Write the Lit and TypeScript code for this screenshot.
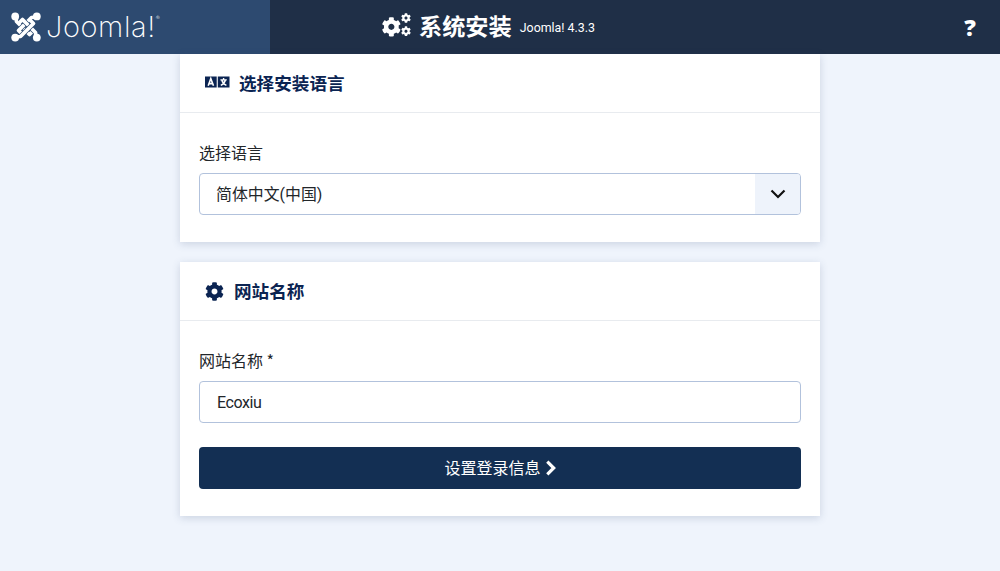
import { LitElement, html, css, svg } from "lit";
import { customElement } from "lit/decorators.js";

const GEAR = "M487.4 315.7l-42.6-24.6c4.3-23.2 4.3-47 0-70.2l42.6-24.6c4.9-2.8 7.1-8.6 5.5-14-11.1-35.6-30-67.8-54.7-94.6-3.8-4.1-10-5.1-14.8-2.3L380.8 110c-17.9-15.4-38.5-27.3-60.8-35.1V25.8c0-5.6-3.9-10.5-9.4-11.7-36.7-8.2-74.3-7.8-109.2 0-5.5 1.2-9.4 6.1-9.4 11.7V75c-22.2 7.9-42.8 19.8-60.8 35.1L88.7 85.5c-4.9-2.8-11-1.9-14.8 2.3-24.7 26.7-43.6 58.9-54.7 94.6-1.7 5.4.6 11.2 5.5 14L67.3 221c-4.3 23.2-4.3 47 0 70.2l-42.6 24.6c-4.9 2.8-7.1 8.6-5.5 14 11.1 35.6 30 67.8 54.7 94.6 3.8 4.1 10 5.1 14.8 2.3l42.6-24.6c17.9 15.4 38.5 27.3 60.8 35.1v49.2c0 5.6 3.9 10.5 9.4 11.7 36.7 8.2 74.3 7.8 109.2 0 5.5-1.2 9.4-6.1 9.4-11.7v-49.2c22.2-7.9 42.8-19.8 60.8-35.1l42.6 24.6c4.9 2.8 11 1.9 14.8-2.3 24.7-26.7 43.6-58.9 54.7-94.6 1.5-5.5-.7-11.3-5.6-14.1zM256 336c-44.1 0-80-35.9-80-80s35.9-80 80-80 80 35.9 80 80-35.9 80-80 80z";

const gearIcon = (cls: string) => html`<svg class=${cls} viewBox="0 0 512 512" fill="currentColor"><path d=${GEAR}></path></svg>`;

const cogsIcon = html`<svg class="cogs" viewBox="0 0 30 24" fill="currentColor">
  ${svg`<g transform="translate(0.5 4) scale(0.0385)"><path d=${GEAR}></path></g>
  <g transform="translate(20 0) scale(0.0195)"><path d=${GEAR}></path></g>
  <g transform="translate(20 13.2) scale(0.0195)"><path d=${GEAR}></path></g>`}
</svg>`;

const langIcon = html`<svg class="lang" viewBox="0 0 25 12">
  <rect x="0" y="0.5" width="11.7" height="11" fill="#0b2452"></rect>
  <rect x="12.8" y="0.5" width="11.7" height="11" fill="#0b2452"></rect>
  <path d="M3.2 9.8 5.8 2.6 8.5 9.8M4.1 7.6H7.6" fill="none" stroke="#fff" stroke-width="1.6"></path>
  <path d="M18.6 2v1.4M15.4 3.9h6.4M16.8 4c.5 2.4 2.2 4.2 4.6 5.4M20.4 4c-.5 2.4-2.2 4.2-4.6 5.4" fill="none" stroke="#fff" stroke-width="1.4"></path>
</svg>`;

const HOOKS = [
  "M5 5 L5.5 9.5 L18.5 22.5 L21 20",
  "M25 5 L20.5 5.5 L7.5 18.5 L10 21",
  "M25 25 L24.5 20.5 L11.5 7.5 L9 10",
  "M5 25 L9.5 24.5 L22.5 11.5 L20 9",
];

const joomlaMark = html`<svg class="mark" viewBox="0 0 30 30" fill="none" stroke-linejoin="round" stroke-linecap="round">
  ${HOOKS.map((d) => svg`
    <path d=${d} stroke="#2d4a70" stroke-width="5" stroke-linecap="butt"></path>
    <path d=${d} stroke="#fff" stroke-width="3.7"></path>`)}
  <g fill="#fff">
    <circle cx="4.2" cy="4.4" r="3.9"></circle>
    <circle cx="25.8" cy="4.4" r="3.9"></circle>
    <circle cx="4.2" cy="25.6" r="3.9"></circle>
    <circle cx="25.8" cy="25.6" r="3.9"></circle>
  </g>
</svg>`;

@customElement("app-root")
export class AppRoot extends LitElement {
  static styles = css`
    :host {
      display: block;
      min-height: 571px;
      background: #eff4fc;
      font-family: "Roboto", "Noto Sans CJK SC", sans-serif;
      color: #22262a;
      font-size: 16px;
    }
    * { box-sizing: border-box; }
    header {
      height: 54px;
      background: #1f2f47;
      display: flex;
      align-items: center;
      color: #fff;
    }
    .brand {
      width: 270px;
      height: 54px;
      background: #2d4a70;
      display: flex;
      align-items: center;
      padding-left: 11px;
      gap: 5px;
      flex: none;
    }
    .mark { width: 30px; height: 30px; flex: none; }
    .word {
      font-family: "Inter", sans-serif;
      font-weight: 200;
      font-size: 29px;
      line-height: 30px;
      letter-spacing: 0.6px;
      position: relative;
    }
    .word sup {
      font-size: 6px;
      position: absolute;
      top: 2px;
      left: 100%;
      line-height: 8px;
      letter-spacing: 0;
    }
    .title {
      display: flex;
      align-items: center;
      margin-left: 111px;
      padding-bottom: 5px;
      flex: 1;
    }
    .cogs { width: 30px; height: 24px; flex: none; margin-right: 8px; }
    .title h1 {
      margin: 0;
      font-size: 23.2px;
      font-weight: 700;
      line-height: 30px;
      font-family: "Noto Sans CJK SC", sans-serif;
    }
    .ver { font-size: 12.4px; margin-left: 8px; margin-top: 5px; }
    .help {
      font-family: "Noto Sans", sans-serif;
      font-weight: 900;
      font-size: 23px;
      line-height: 24px;
      width: 60px;
      text-align: center;
    }
    main {
      width: 640px;
      margin: 0 auto;
      display: flex;
      flex-direction: column;
      gap: 20px;
    }
    .card {
      background: #fff;
      box-shadow: 0 2px 8px rgba(60, 80, 120, 0.2);
    }
    .head {
      height: 59px;
      border-bottom: 1px solid #e8ebef;
      display: flex;
      align-items: center;
      padding: 0 0 2px 25px;
      color: #0b2452;
      font-size: 17.6px;
      font-weight: 700;
    }
    .head span { font-family: "Noto Sans CJK SC", sans-serif; }
    .lang { width: 25px; height: 12px; margin-right: 9px; flex: none; }
    .gear { width: 19px; height: 19px; margin: 2px 10px 0 0; flex: none; }
    .body { padding: 27px 19px 27px; }
    label {
      display: block;
      line-height: 24px;
      margin-bottom: 9px;
      font-size: 16px;
      font-family: "Noto Sans CJK SC", sans-serif;
    }
    .field {
      height: 42px;
      border: 1px solid #b2c2dc;
      border-radius: 4px;
      background: #fff;
      display: flex;
      align-items: center;
      padding-left: 17px;
      font-size: 16px;
      letter-spacing: -0.4px;
      overflow: hidden;
    }
    .grow { flex: 1; padding-bottom: 2px; margin-left: -1px; font-size: 15.9px; letter-spacing: 0; }
    .chev {
      width: 45px;
      align-self: stretch;
      background: #eef3fb;
      display: flex;
      align-items: center;
      justify-content: center;
    }
    .chev svg { width: 16px; height: 10px; }
    button {
      display: flex;
      align-items: center;
      justify-content: center;
      gap: 4px;
      width: 100%;
      height: 42px;
      margin-top: 24px;
      background: #132f53;
      color: #fff;
      border: 0;
      border-radius: 4px;
      font: inherit;
      font-size: 16px;
      font-family: "Noto Sans CJK SC", sans-serif;
      padding: 0 0 2px;
    }
    button svg { width: 11px; height: 16px; margin-top: 2px; }
  `;

  render() {
    return html`
      <header>
        <div class="brand">
          ${joomlaMark}
          <div class="word">Joomla!<sup>®</sup></div>
        </div>
        <div class="title">
          ${cogsIcon}
          <h1>系统安装</h1>
          <span class="ver">Joomla! 4.3.3</span>
        </div>
        <div class="help">?</div>
      </header>
      <main>
        <section class="card">
          <div class="head">${langIcon}<span>选择安装语言</span></div>
          <div class="body">
            <label>选择语言</label>
            <div class="field">
              <span class="grow">简体中文(中国)</span>
              <div class="chev">
                <svg viewBox="0 0 16 10" fill="none" stroke="#111" stroke-width="2.2"><path d="M1.5 1.5 8 8l6.5-6.5"></path></svg>
              </div>
            </div>
          </div>
        </section>
        <section class="card">
          <div class="head">${gearIcon("gear")}<span>网站名称</span></div>
          <div class="body">
            <label>网站名称 *</label>
            <div class="field">Ecoxiu</div>
            <button>设置登录信息
              <svg viewBox="0 0 10 15" fill="none" stroke="#fff" stroke-width="3"><path d="M2 1.5 8 7.5 2 13.5"></path></svg>
            </button>
          </div>
        </section>
      </main>
    `;
  }
}
